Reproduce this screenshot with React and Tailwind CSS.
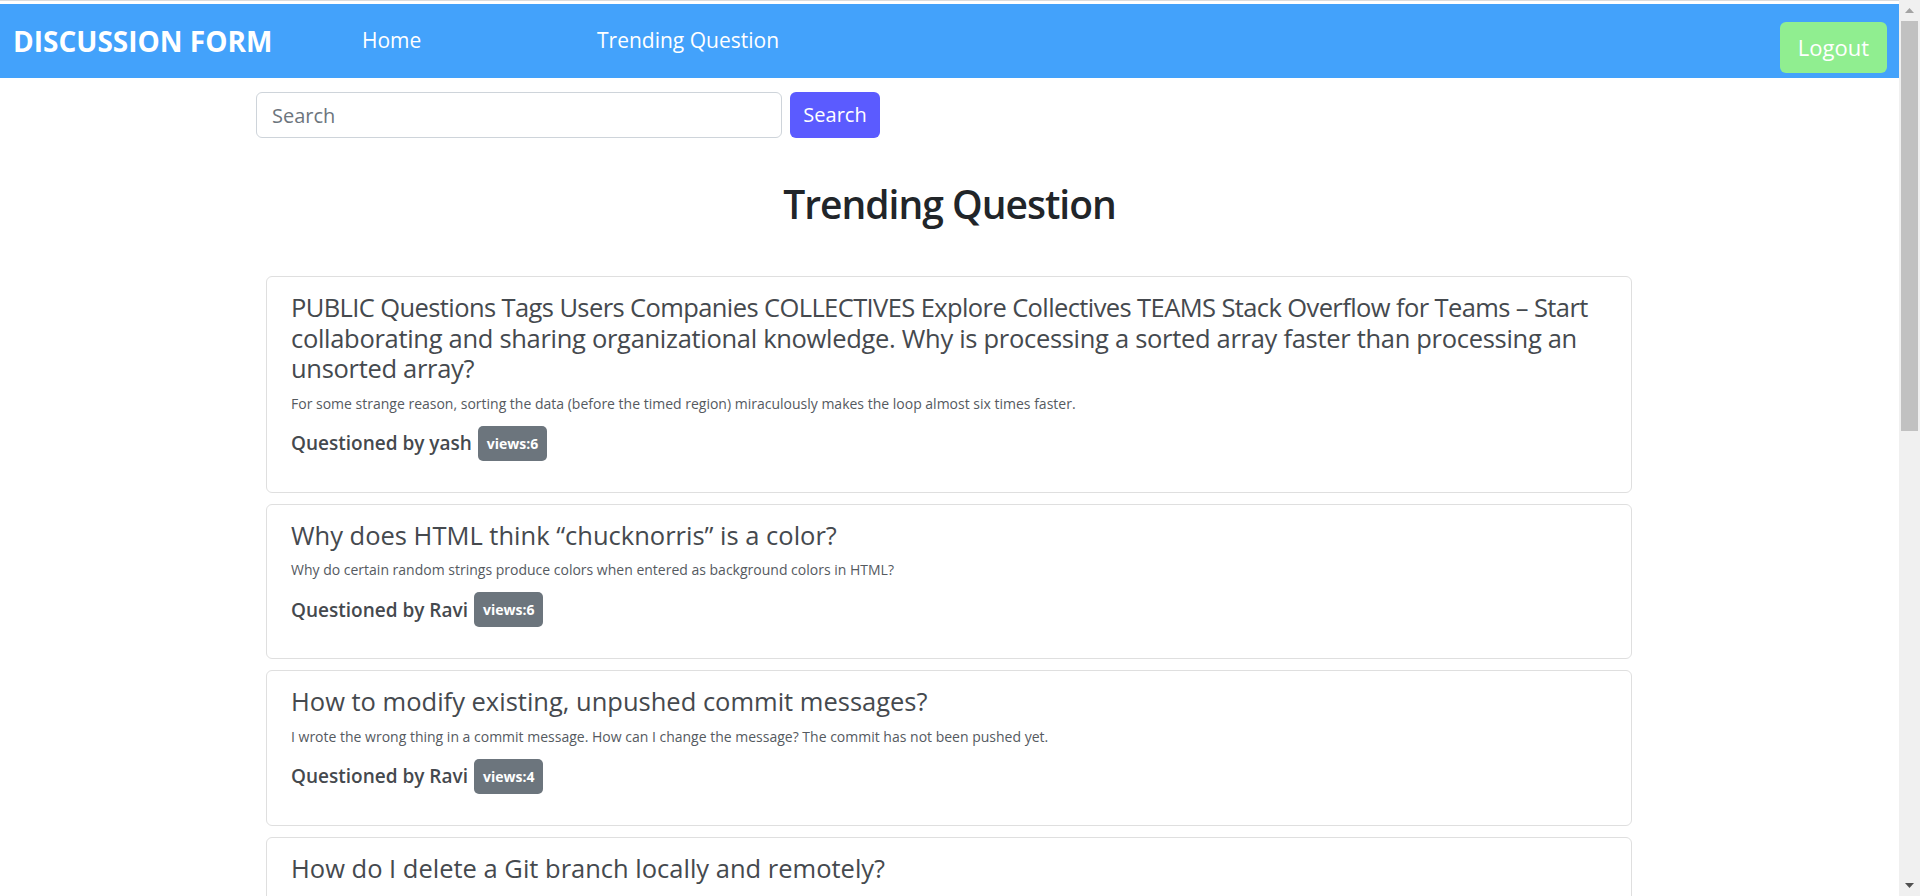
import React from 'react';

const questions = [
    {
        lead: 'PUBLIC Questions Tags Users Companies COLLECTIVES Explore Collectives TEAMS Stack Overflow for Teams – Start',
        title: ' collaborating and sharing organizational knowledge. Why is processing a sorted array faster than processing an unsorted array?',
        tight: true,
        body: 'For some strange reason, sorting the data (before the timed region) miraculously makes the loop almost six times faster.',
        user: 'yash',
        views: 6,
    },
    {
        title: 'Why does HTML think “chucknorris” is a color?',
        body: 'Why do certain random strings produce colors when entered as background colors in HTML?',
        user: 'Ravi',
        views: 6,
    },
    {
        title: 'How to modify existing, unpushed commit messages?',
        body: 'I wrote the wrong thing in a commit message. How can I change the message? The commit has not been pushed yet.',
        user: 'Ravi',
        views: 4,
    },
    {
        title: 'How do I delete a Git branch locally and remotely?',
        body: 'Failed Attempts: I want to delete a branch both locally and remotely.',
        user: 'yash',
        views: 3,
    },
];

const QuestionCard = ({ q }) => (
    <div className="bg-white border border-[#dfdfdf] rounded-[6px] pt-[15px] px-[24px] pb-[31px]">
        <h4 className="text-[25.5px] leading-[30.6px] font-medium text-[#45494e]">
            {q.lead && <span className="tracking-[-0.6px]">{q.lead}</span>}
            <span className={q.tight ? 'tracking-[-0.3px]' : ''}>{q.title}</span>
        </h4>
        <p className="mt-[9px] text-[14px] leading-[21px] text-[#555a5f]">{q.body}</p>
        <div className="mt-[12px] flex items-center">
            <span className="text-[19px] leading-[30px] font-semibold text-[#45494e]">Questioned by {q.user}</span>
            <span className="ml-[6px] h-[35px] px-[9px] rounded-[5px] bg-[#6c757d] text-white text-[14px] font-bold flex items-center">
                views:{q.views}
            </span>
        </div>
    </div>
);

// fake browser scrollbar on the right edge
const ScrollBar = () => (
    <div className="w-[21px] h-screen bg-[#f0f0f0] flex flex-col items-center shrink-0">
        <svg width="21" height="21" viewBox="0 0 21 21" className="shrink-0">
            <path d="M6 13 L10.5 8 L15 13 Z" fill="#a3a3a3" />
        </svg>
        <div className="w-[17px] h-[410px] bg-[#c1c1c1]" />
        <div className="flex-1" />
        <svg width="21" height="21" viewBox="0 0 21 21" className="shrink-0">
            <path d="M6 8 L10.5 13 L15 8 Z" fill="#505050" />
        </svg>
    </div>
);

const App = () => {
    return (
        <div className="h-screen flex overflow-hidden bg-white font-['Open_Sans',sans-serif]">
            <div className="flex-1 min-w-0 overflow-hidden">
                <div className="h-[4px] border-t border-[#dcdcdc]" />

                {/* navbar */}
                <nav className="h-[74px] bg-[#43a2fb] flex items-center text-white">
                    <div className="w-[362px] pl-[13px] text-[28px] font-bold">DISCUSSION FORM</div>
                    <a href="#" className="w-[235px] text-[21px]">Home</a>
                    <a href="#" className="text-[21px]">Trending Question</a>
                    <button className="ml-auto mr-[12px] self-start mt-[18px] h-[51px] px-[18px] rounded-[6px] bg-[#90ee90] text-white text-[22px]">
                        Logout
                    </button>
                </nav>

                {/* search */}
                <div className="mt-[14px] pl-[256px] flex gap-[8px]">
                    <input
                        type="text"
                        placeholder="Search"
                        className="w-[526px] h-[46px] px-[15px] border border-[#ced4da] rounded-[6px] text-[20px] text-[#212529] placeholder:text-[#6c757d] outline-none"
                    />
                    <button className="w-[90px] h-[46px] rounded-[6px] bg-[#5b5bff] text-white text-[20px]">Search</button>
                </div>

                <h1 className="mt-[42px] text-center text-[39px] leading-[48px] tracking-[-1px] font-semibold text-[#212529]">
                    Trending Question
                </h1>

                <div className="mt-[48px] ml-[266px] w-[1366px] flex flex-col gap-[11px] pb-[40px]">
                    {questions.map((q, i) => (
                        <QuestionCard key={i} q={q} />
                    ))}
                </div>
            </div>
            <ScrollBar />
        </div>
    );
};

export default App;
